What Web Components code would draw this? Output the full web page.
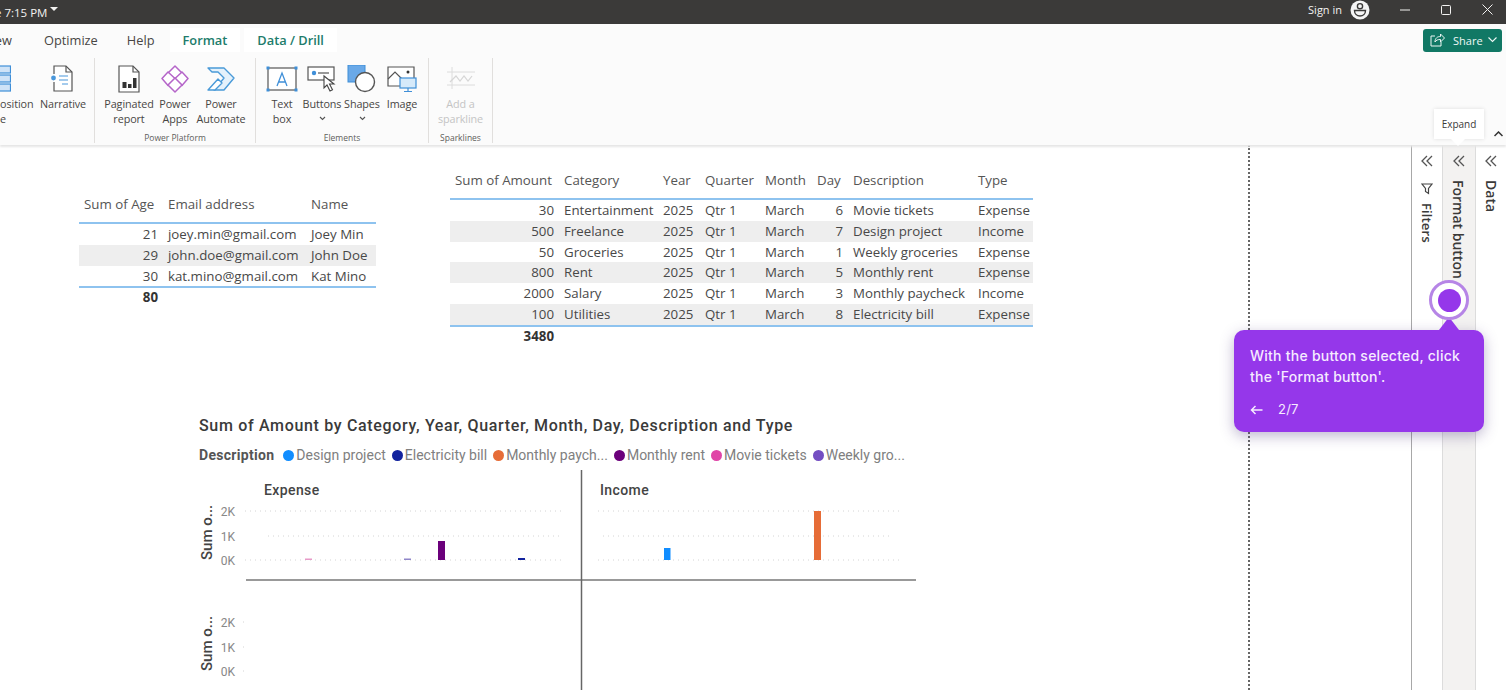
<!DOCTYPE html>
<html lang="en">
<head>
<meta charset="utf-8">
<title>Power BI</title>
<style>
	html, body { margin: 0; height: 100%; overflow: hidden; background: #fff; }
	body { font-family: "Open Sans", "Noto Sans", sans-serif; }
</style>
</head>
<body>

<pb-app>
	<pb-titlebar slot="top"></pb-titlebar>
	<pb-tabs slot="top"></pb-tabs>
	<pb-ribbon slot="top">
		<rb-group label="" gap="2" end style="margin-left:-48px;width:143px">
			<rb-item width="84" text="Decomposition|tree">
				<svg width="30" height="28" viewBox="0 0 30 28"><g fill="#cfe3f7" stroke="#3f8fd8" stroke-width="1.2"><rect x="10" y="1" width="19.500" height="7"/><rect x="10" y="10" width="19.500" height="7"/><rect x="10" y="19" width="19.500" height="7"/></g></svg>
			</rb-item>
			<rb-item width="46" text="Narrative">
				<svg width="28" height="28" viewBox="0 0 28 28"><path d="M5 9V1h12l6 6v19H5v-9" fill="#fff" stroke="#555" stroke-width="1.2"/><path d="M17 1v6h6" fill="none" stroke="#555" stroke-width="1.2"/><circle cx="4.500" cy="13" r="2.400" fill="#4a98dc"/><path d="M10 11h9M10 15h9M13 19h6" stroke="#4a98dc" stroke-width="1.200"/></svg>
			</rb-item>
		</rb-group>
		<rb-group label="Power Platform" gap="3" style="width:161px">
			<rb-item width="50" text="Paginated|report">
				<svg width="28" height="28" viewBox="0 0 28 28"><path d="M4 1h14l6 6v20H4z" fill="#fff" stroke="#555" stroke-width="1.200"/><path d="M18 1v6h6" fill="none" stroke="#555" stroke-width="1.200"/><path d="M7.500 17h4v6h-4zM13 19h3.500v4H13zM18 13h3.500v10H18z" fill="#333"/></svg>
			</rb-item>
			<rb-item width="36" text="Power|Apps">
				<svg width="28" height="28" viewBox="0 0 28 28"><g fill="#fff" stroke="#b565c9" stroke-width="1.500" stroke-linejoin="round"><path d="M14 1l7 7-7 7-7-7z"/><path d="M21 7l6 6.500-6 7-7-7z"/><path d="M7 7l7 6.500-7 7-6-7z"/><path d="M14 13l7 7-7 7-7-7z"/></g></svg>
			</rb-item>
			<rb-item width="50" text="Power|Automate">
				<svg width="30" height="28" viewBox="0 0 30 28"><g fill="#e4f1fb" stroke="#4a9ad8" stroke-width="1.400" stroke-linejoin="round"><path d="M2 3h16l10 10-10 12H8l10-12-6-6H6z"/><path d="M2 25l10-11 4 4-7 7z" fill="#fff"/></g></svg>
			</rb-item>
		</rb-group>
		<rb-group label="Elements" gap="0" style="width:173px">
			<rb-item width="40" text="Text|box">
				<svg width="32" height="28" viewBox="0 0 32 28"><rect x="2" y="3" width="28" height="22" fill="#fff" stroke="#555" stroke-width="1.200"/><g fill="#3f8fd8"><rect x="0.500" y="1.500" width="3" height="3"/><rect x="28.500" y="1.500" width="3" height="3"/><rect x="0.500" y="23.500" width="3" height="3"/><rect x="28.500" y="23.500" width="3" height="3"/></g><path d="M11 21l5-13 5 13M12.800 17h6.400" fill="none" stroke="#3f8fd8" stroke-width="1.300"/></svg>
			</rb-item>
			<rb-item width="40" text="Buttons" more>
				<svg width="30" height="28" viewBox="0 0 30 28"><rect x="1" y="2" width="26" height="13" fill="#fff" stroke="#555" stroke-width="1.200"/><circle cx="7" cy="8" r="2.200" fill="#3f8fd8"/><path d="M11 8h11" stroke="#555" stroke-width="1.200"/><path d="M17 11v12l3-3 3 6 2.500-1.200-3-5.800h4.500z" fill="#fff" stroke="#444" stroke-width="1.100"/></svg>
			</rb-item>
			<rb-item width="40" text="Shapes" more>
				<svg width="30" height="28" viewBox="0 0 30 28"><rect x="1" y="0" width="17" height="17" fill="#6aa9e8" stroke="#3f8fd8"/><circle cx="18" cy="17" r="9.500" fill="#fff" stroke="#555" stroke-width="1.400"/></svg>
			</rb-item>
			<rb-item width="40" text="Image">
				<svg width="30" height="28" viewBox="0 0 30 28"><path d="M13 21H1V2h26v11" fill="#fff" stroke="#555" stroke-width="1.200"/><path d="M1 14l7-7 7 7" fill="none" stroke="#555" stroke-width="1.200"/><circle cx="21" cy="7" r="1.500" fill="#333"/><rect x="13" y="13" width="16" height="10" fill="#d6eafa" stroke="#3f8fd8" stroke-width="1.200"/><path d="M21 23v3M17 26.500h8" stroke="#3f8fd8" stroke-width="1.200"/></svg>
			</rb-item>
		</rb-group>
		<rb-group label="Sparklines" style="width:64px">
			<rb-item width="50" text="Add a|sparkline" disabled>
				<svg width="30" height="28" viewBox="0 0 30 28" opacity=".55"><path d="M6 2v22M1 7h28M1 20h28" stroke="#c4c4c4" fill="none"/><path d="M4 17l6-6 4 5 4-5 4 5 4-5" stroke="#b8b8b8" fill="none" stroke-width="1.200"/></svg>
			</rb-item>
		</rb-group>
	</pb-ribbon>

	<pb-canvas slot="canvas">
		<pb-table style="left:79px;top:41px" columns="84px 143px 70px"
			head="Sum of Age|Email address|Name"
			rows="21|joey.min@gmail.com|Joey Min;29|john.doe@gmail.com|John Doe;30|kat.mino@gmail.com|Kat Mino"
			total="80"></pb-table>
		<pb-table style="left:450px;top:17px" columns="109px 99px 42px 60px 52px 36px 125px 60px" right="0,5"
			head="Sum of Amount|Category|Year|Quarter|Month|Day|Description|Type"
			rows="30|Entertainment|2025|Qtr 1|March|6|Movie tickets|Expense;500|Freelance|2025|Qtr 1|March|7|Design project|Income;50|Groceries|2025|Qtr 1|March|1|Weekly groceries|Expense;800|Rent|2025|Qtr 1|March|5|Monthly rent|Expense;2000|Salary|2025|Qtr 1|March|3|Monthly paycheck|Income;100|Utilities|2025|Qtr 1|March|8|Electricity bill|Expense"
			total="3480"></pb-table>
		<pb-chart style="left:199px;top:271px"></pb-chart>
	</pb-canvas>
	<pb-pane slot="pane" text="Filters" icon></pb-pane>
	<pb-pane slot="pane" text="Format button" active></pb-pane>
	<pb-pane slot="pane" text="Data"></pb-pane>

	<pb-expand-tip slot="over"></pb-expand-tip>
	<pb-guide slot="over" step="2/7">With the button selected, click the 'Format button'.</pb-guide>
</pb-app>

<script>
class PbApp extends HTMLElement {

	constructor() {

		super();

		this.attachShadow({ mode: 'open' });
		this.shadowRoot.innerHTML = `
			<style>
				:host { display: flex; flex-direction: column; width: 1506px; height: 690px; position: relative; overflow: hidden; }
				.work { flex: 1; display: flex; min-height: 0; }
				.panes { display: flex; }
			</style>
			<slot name="top"></slot>
			<div class="work">
				<slot name="canvas"></slot>
				<div class="panes"><slot name="pane"></slot></div>
			</div>
			<slot name="over"></slot>
		`;

	}

}

class PbTitlebar extends HTMLElement {

	constructor() {

		super();

		this.attachShadow({ mode: 'open' });
		this.shadowRoot.innerHTML = `
			<style>
				:host { display: flex; align-items: center; height: 24px; background: #3b3a39; color: #f3f2f1; font: 11.5px "Open Sans", sans-serif; }
				.time { margin-left: -5px; font-size: 11.500px; }
				.caret { width: 0; height: 0; margin: -6px 0 0 3px; border: 4px solid transparent; border-top: 4px solid #f3f2f1; border-bottom: 0; }
				.right { margin-left: auto; display: flex; align-items: center; padding-bottom: 5px; }
				.sign { font-size: 11px; }
				svg { display: block; }
				.user { margin: 0 30px 0 8px; }
				.win { margin-right: 31px; }
				.win:last-child { margin-right: 13px; }
			</style>
			<span class="time">e 7:15 PM</span><span class="caret"></span>
			<div class="right">
				<span class="sign">Sign in</span>
				<svg class="user" width="20" height="20" viewBox="0 0 20 20"><circle cx="10" cy="10" r="9.500" fill="#f5f5f5"/><circle cx="10" cy="6.200" r="2.600" fill="none" stroke="#3b3a39" stroke-width="1.400"/><path d="M4.500 10.500h11c0 3.500-2.500 5.500-5.500 5.500s-5.500-2-5.500-5.500z" fill="none" stroke="#3b3a39" stroke-width="1.400"/></svg>
				<svg class="win" width="10" height="10" viewBox="0 0 10 10"><path d="M0 5h10" stroke="#f3f2f1"/></svg>
				<svg class="win" width="10" height="10" viewBox="0 0 10 10"><rect x=".5" y=".5" width="9" height="9" rx="1" fill="none" stroke="#f3f2f1"/></svg>
				<svg class="win" width="11" height="11" viewBox="0 0 11 11"><path d="M.5.500l10 10M10.500.500l-10 10" stroke="#f3f2f1"/></svg>
			</div>
		`;

	}

}

class PbTabs extends HTMLElement {

	constructor() {

		super();

		this.attachShadow({ mode: 'open' });
		this.shadowRoot.innerHTML = `
			<style>
				:host { display: flex; align-items: center; height: 31px; padding-top: 1px; box-sizing: border-box; background: #fbfbfb; color: #484644; font: 12.800px "Open Sans", sans-serif; }
				.t { height: 24px; line-height: 24px; padding: 0 13px; }
				.view { margin-left: -29px; margin-right: 5px; padding-right: 14px; }
				.on { background: #fff; color: #217c6b; font-weight: 600; }
				.help { margin: 0 2px 0 3px; }
				.share { margin-left: auto; margin-right: 4px; display: flex; align-items: center; width: 79px; height: 23px; box-sizing: border-box; padding-left: 7px; background: #117865; color: #eef7f5; border-radius: 3px; font-size: 11px; }
				.share svg:first-child { margin-right: 8px; }
				.share svg:last-child { margin-left: 5px; }
			</style>
			<span class="t view">View</span>
			<span class="t">Optimize</span>
			<span class="t help">Help</span>
			<span class="t on">Format</span>
			<span class="t on" style="margin-left:4px">Data / Drill</span>
			<div class="share">
				<svg width="15" height="14" viewBox="0 0 15 14"><path d="M5 3H1v10h10V9M5 9c0-4 2.500-5.500 5.500-5.500V1l4 4-4 4V6.500C8 6.500 6 7 5 9z" fill="none" stroke="#eef7f5"/></svg>
				<span>Share</span>
				<svg width="9" height="6" viewBox="0 0 9 6"><path d="M.5.500l4 4 4-4" fill="none" stroke="#eef7f5" stroke-width="1.100"/></svg>
			</div>
		`;

	}

}

class PbRibbon extends HTMLElement {

	constructor() {

		super();

		this.attachShadow({ mode: 'open' });
		this.shadowRoot.innerHTML = `
			<style>
				:host { display: flex; height: 90px; background: #fbfbfb; box-shadow: 0 2px 2px #e6e6e6; position: relative; z-index: 1; }
			</style>
			<slot></slot>
			<svg style="position:absolute;right:3px;bottom:8px" width="9" height="6" viewBox="0 0 9 6"><path d="M.5 5l4-4 4 4" fill="none" stroke="#333" stroke-width="1.500"/></svg>
		`;

	}

}

class RbGroup extends HTMLElement {

	constructor() {

		super();

		const gap = this.getAttribute('gap') || 0;
		const end = this.hasAttribute('end');

		this.attachShadow({ mode: 'open' });
		this.shadowRoot.innerHTML = `
			<style>
				:host { display: flex; flex-direction: column; box-sizing: border-box; flex: none; margin: 3px 0 0; height: 85px; border-right: 1px solid #e1dfdd; }
				.items { flex: 1; display: flex; justify-content: ${end ? 'flex-end' : 'center'}; padding: 5px ${end ? 8 : 0}px 0 0; gap: ${gap}px; }
				.label { text-align: center; font: 8.500px/11px "Open Sans", sans-serif; color: #605e5c; }
			</style>
			<div class="items"><slot></slot></div>
			<div class="label">${this.getAttribute('label') || ''}</div>
		`;

	}

}

class RbItem extends HTMLElement {

	constructor() {

		super();

		const width = this.getAttribute('width');
		const more = this.hasAttribute('more')
			? '<svg class="more" width="7" height="5" viewBox="0 0 7 5"><path d="M1 1l2.500 2.500L6 1" fill="none" stroke="#555" stroke-width="1.100"/></svg>'
			: '';

		this.attachShadow({ mode: 'open' });
		this.shadowRoot.innerHTML = `
			<style>
				:host { display: flex; flex-direction: column; align-items: center; flex: none; width: ${width}px; color: ${this.hasAttribute('disabled') ? '#c4c4c4' : '#484644'}; font: 10.800px/15px "Open Sans", sans-serif; text-align: center; white-space: nowrap; }
				.icon { height: 30px; display: flex; align-items: flex-end; justify-content: center; }
				.text { margin: 3px -6px 0; letter-spacing: -.1px; }
				.more { display: block; margin: 5px auto 0; }
			</style>
			<div class="icon"><slot></slot></div>
			<div class="text">${this.getAttribute('text').replace('|', '<br>')}</div>
			${more}
		`;

	}

}

class PbCanvas extends HTMLElement {

	constructor() {

		super();

		this.attachShadow({ mode: 'open' });
		this.shadowRoot.innerHTML = `
			<style>
				:host { display: block; flex: 1; position: relative; background: #fff; }
				.edge { position: absolute; left: 1248px; top: 0; bottom: 0; border-left: 2px dotted #666; }
			</style>
			<div class="edge"></div>
			<slot></slot>
		`;

	}

}

class PbTable extends HTMLElement {

	constructor() {

		super();

		const right = (this.getAttribute('right') || '0').split(',').map(Number);
		const cell = (text, i, cls) => `<div class="c ${cls} ${right.includes(i) ? 'r' : ''}">${text}</div>`;
		const head = this.getAttribute('head').split('|');
		const rows = this.getAttribute('rows').split(';').map((r) => r.split('|'));

		let html = head.map((h) => `<div class="c h">${h}</div>`).join('');
		rows.forEach((r, n) => {
			html += r.map((t, i) => cell(t, i, (n % 2 ? 'odd' : '') + (n === rows.length - 1 ? ' last' : ''))).join('');
		});

		this.attachShadow({ mode: 'open' });
		this.shadowRoot.innerHTML = `
			<style>
				:host { display: block; position: absolute; color: #484848; font: 13.300px "Open Sans", sans-serif; }
				.grid { display: grid; grid-template-columns: ${this.getAttribute('columns')}; }
				.c { height: 20.800px; line-height: 20.800px; padding: 0 5px; white-space: nowrap; box-sizing: border-box; }
				.h { height: 38px; line-height: 36px; border-bottom: 2px solid #8ec3ef; color: #555; }
				.r { text-align: right; }
				.odd { background: #eeeeee; }
				.last { height: 22.800px; border-bottom: 2px solid #8ec3ef; }
				.total { width: ${this.getAttribute('columns').split(' ')[0]}; box-sizing: border-box; padding: 0 5px; text-align: right; font-weight: 700; line-height: 19px; color: #333; }
			</style>
			<div class="grid">${html}</div>
			<div class="total">${this.getAttribute('total')}</div>
		`;

	}

}

class PbChart extends HTMLElement {

	constructor() {

		super();

		const legend = [
			['#118dff', 'Design project'], ['#12239e', 'Electricity bill'], ['#e66c37', 'Monthly paych...'],
			['#6b007b', 'Monthly rent'], ['#e044a7', 'Movie tickets'], ['#744ec2', 'Weekly gro...']
		];
		const dots = (x1, x2, y) => `<path d="M${x1} ${y}H${x2}" stroke="#d4d4d4" stroke-dasharray="1 4"/>`;
		const axis = (top, title) => `
			<text class="tick" x="37" y="${top + 5}" text-anchor="end">2K</text>
			<text class="tick" x="37" y="${top + 30}" text-anchor="end">1K</text>
			<text class="tick" x="37" y="${top + 54}" text-anchor="end">0K</text>
			<text class="ax" transform="translate(14 ${top + 49}) rotate(-90)">${title}</text>`;

		this.attachShadow({ mode: 'open' });
		this.shadowRoot.innerHTML = `
			<style>
				:host { display: block; position: absolute; width: 720px; font-family: Roboto, sans-serif; }
				.title { font-size: 16px; font-weight: 500; line-height: 20px; color: #3a3a3a; letter-spacing: .67px; white-space: nowrap; }
				.legend { display: flex; align-items: center; gap: 6px; margin-top: 9px; height: 20px; font: 14px Roboto, sans-serif; color: #808080; white-space: nowrap; }
				.legend b { color: #555; margin-right: 3px; letter-spacing: .3px; }
				.legend span { display: flex; align-items: center; gap: 2px; }
				.legend i { width: 11px; height: 11px; border-radius: 50%; }
				svg { display: block; margin: 5px 0 0 -1px; overflow: visible; }
				text { font-family: Roboto, sans-serif; }
				.tick { font-size: 12px; fill: #888; }
				.ax { font-size: 15px; font-weight: 500; fill: #444; }
				.hd { font-size: 14px; font-weight: 500; fill: #444; letter-spacing: .4px; }
			</style>
			<div class="title">Sum of Amount by Category, Year, Quarter, Month, Day, Description and Type</div>
			<div class="legend">
				<b>Description</b>
				${legend.map(([c, t]) => `<span><i style="background:${c}"></i>${t}</span>`).join('')}
			</div>
			<svg width="720" height="220" viewBox="0 0 720 220">
				<text class="hd" x="66" y="25">Expense</text>
				<text class="hd" x="402" y="25">Income</text>
				${axis(41, 'Sum o...')}
				${axis(152, 'Sum o...')}
				${dots(47, 367, 41)}${dots(70, 362, 66)}${dots(47, 367, 90)}
				${dots(400, 702, 41)}${dots(405, 695, 66)}${dots(400, 702, 90)}
				${dots(45, 48, 152)}${dots(45, 48, 177)}${dots(45, 48, 201)}
				<rect x="107" y="88.500" width="7" height="1.500" fill="#e79ac8"/>
				<rect x="206" y="88.500" width="7" height="1.500" fill="#8f86c9"/>
				<rect x="240" y="71" width="7" height="19" fill="#6b007b"/>
				<rect x="320" y="88" width="7" height="2" fill="#12239e"/>
				<rect x="466" y="78" width="6.500" height="12" fill="#118dff"/>
				<rect x="616" y="41" width="7" height="49" fill="#e66c37"/>
				<path d="M48 110H718" stroke="#777" stroke-width="1.500"/>
				<path d="M383.500 0V220" stroke="#666" stroke-width="1.500"/>
			</svg>
		`;

	}

}

class PbPane extends HTMLElement {

	constructor() {

		super();

		const filters = this.hasAttribute('icon');
		const active = this.hasAttribute('active');
		const icon = filters
			? '<svg width="12" height="12" viewBox="0 0 12 12"><path d="M1 1h10L7.500 5.500v5l-3-2v-3z" fill="none" stroke="#444" stroke-width="1.200" transform="rotate(90 6 6)"/></svg>'
			: '';

		this.attachShadow({ mode: 'open' });
		this.shadowRoot.innerHTML = `
			<style>
				:host { display: flex; flex-direction: column; align-items: center; width: ${active ? 33 : 31}px; box-sizing: border-box; border-left: 1px solid ${filters ? '#a8a8a8' : '#dcdcdc'}; padding-top: 9px; background: ${active ? '#f3f2f1' : '#fff'}; color: #3b3a39; font: 600 ${filters ? 13.3 : 14}px "Open Sans", sans-serif; }
				.ch { width: 14px; height: 14px; display: block; margin-bottom: 12px; }
				.v { writing-mode: vertical-rl; display: flex; align-items: center; gap: 8px; white-space: nowrap; margin-top: ${filters ? 3 : 0}px; margin-left: ${active ? -2 : 0}px; }
				.v svg { transform: rotate(-90deg); }
			</style>
			<svg class="ch" viewBox="0 0 14 14"><path d="M7 2L2 7l5 5M12 2L7 7l5 5" fill="none" stroke="#555" stroke-width="1.300"/></svg>
			<div class="v">${icon}<span>${this.getAttribute('text')}</span></div>
		`;

	}

}

class PbExpandTip extends HTMLElement {

	constructor() {

		super();

		this.attachShadow({ mode: 'open' });
		this.shadowRoot.innerHTML = `
			<style>
				:host { display: block; position: absolute; left: 1434px; top: 109px; width: 50px; height: 30px; z-index: 3; background: #fff; color: #3b3a39; font: 10px/30px "Open Sans", sans-serif; text-align: center; box-shadow: 0 0 4px rgba(0,0,0,.12); }
				:host::after { content: ""; position: absolute; left: 17px; top: 30px; border: 7px solid transparent; border-top-color: #fff; border-bottom: 0; }
			</style>
			Expand
		`;

	}

}

class PbGuide extends HTMLElement {

	constructor() {

		super();

		this.attachShadow({ mode: 'open' });
		this.shadowRoot.innerHTML = `
			<style>
				:host { display: block; position: absolute; left: 1234px; top: 330px; width: 250px; height: 102px; box-sizing: border-box; padding: 15px 16px; z-index: 4; background: #9537ea; color: #f6ebff; border-radius: 10px; box-shadow: 0 4px 14px rgba(70,50,120,.35); font: 500 14px/21px Inter, sans-serif; letter-spacing: .25px; }
				:host::before { content: ""; position: absolute; left: 205px; top: -13px; border: 10px solid transparent; border-top: 0; border-bottom: 13px solid #9537ea; }
				.ring { position: absolute; left: 195px; top: -50px; width: 40px; height: 40px; box-sizing: border-box; border: 3px solid #b685e6; border-radius: 50%; background: #fff; display: flex; align-items: center; justify-content: center; }
				.ring i { width: 23px; height: 23px; border-radius: 50%; background: #9537ea; }
				.foot { display: flex; align-items: center; gap: 15px; margin-top: 12px; font-size: 13px; font-weight: 400; }
				svg { display: block; }
			</style>
			<div class="ring"><i></i></div>
			<slot></slot>
			<div class="foot">
				<svg width="13" height="10" viewBox="0 0 13 10"><path d="M12.500 5H1.500M5.500 1l-4 4 4 4" fill="none" stroke="#f6ebff" stroke-width="1.500"/></svg>
				<span>${this.getAttribute('step')}</span>
			</div>
		`;

	}

}

customElements.define('pb-app', PbApp);
customElements.define('pb-titlebar', PbTitlebar);
customElements.define('pb-tabs', PbTabs);
customElements.define('pb-ribbon', PbRibbon);
customElements.define('rb-group', RbGroup);
customElements.define('rb-item', RbItem);
customElements.define('pb-canvas', PbCanvas);
customElements.define('pb-table', PbTable);
customElements.define('pb-chart', PbChart);
customElements.define('pb-pane', PbPane);
customElements.define('pb-expand-tip', PbExpandTip);
customElements.define('pb-guide', PbGuide);
</script>
</body>
</html>
